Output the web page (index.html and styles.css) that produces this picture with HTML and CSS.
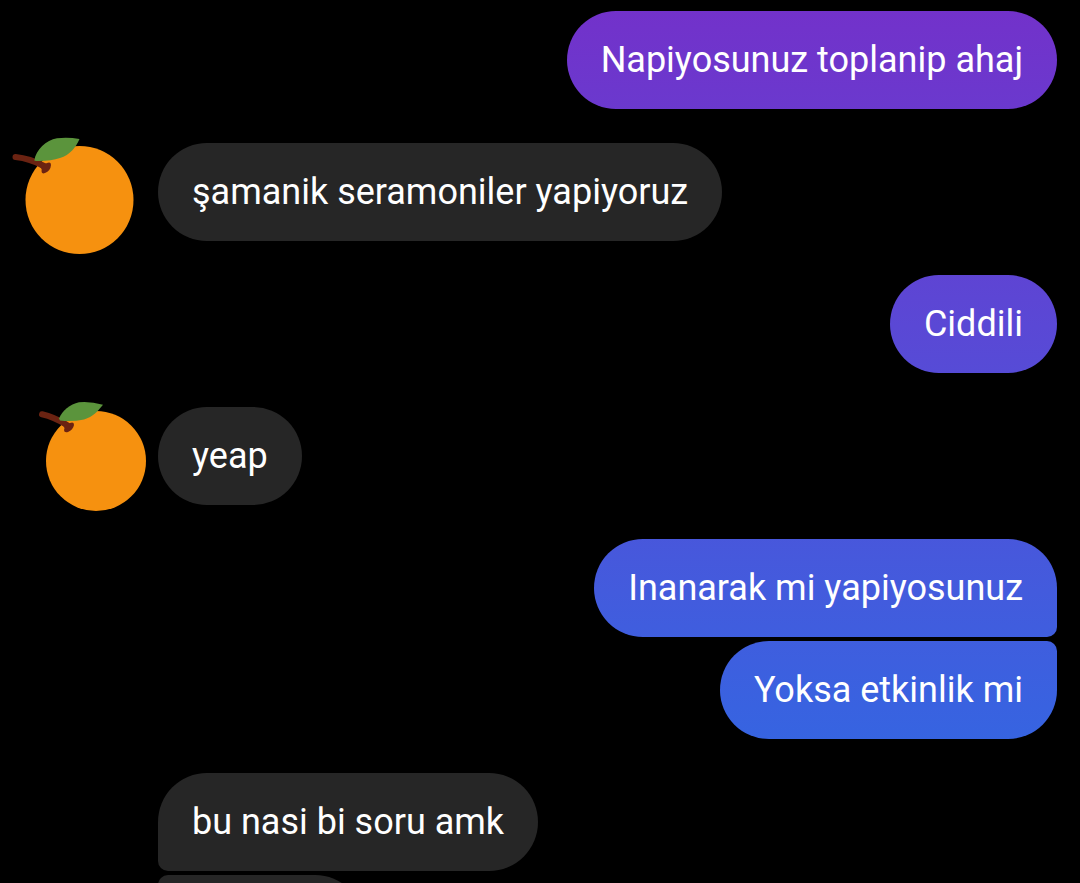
FILE: index.html
```html
<!DOCTYPE html>
<html lang="tr">
<head>
<meta charset="utf-8">
<meta name="viewport" content="width=device-width, initial-scale=1">
<title>Sohbet</title>
<link rel="stylesheet" href="styles.css">
</head>
<body>
<main class="chat">
  <div class="row sent"><p class="bubble">Napiyosunuz toplanip ahaj</p></div>
  <div class="row received">
    <svg class="sticker sticker-large" viewBox="10 136 126 120" aria-hidden="true">
      <circle class="fruit" cx="79.5" cy="200" r="54"/>
      <path class="twig" d="M15.500 157Q30 158.500 44 166"/>
      <path class="stem" d="M42 163Q45 164.500 47 163Q51 161.500 51 165Q50.500 171 45 173Q41.500 174.500 41.500 171Q42.500 168.500 39 166.500Z"/>
      <path class="leaf" d="M34.300 160.500C36 150 46 140 57 138.300Q68 137 79.500 139C76 147 70 155 60 158Q50 161.500 36 161Z"/>
    </svg>
    <p class="bubble">şamanik seramoniler yapiyoruz</p>
  </div>
  <div class="row sent"><p class="bubble">Ciddili</p></div>
  <div class="row received">
    <svg class="sticker sticker-small" viewBox="38 400 110 112" aria-hidden="true">
      <circle class="fruit" cx="96" cy="461" r="50"/>
      <path class="twig" d="M42 414.300Q54 417 67 425"/>
      <path class="stem" d="M66 422Q68 424 70 423Q74 421.500 74 425Q73 430 68 432Q64 433 64 430Q65.500 427.500 62 425Z"/>
      <path class="leaf" d="M59 418.500C62 411 70 404 79 402.200Q90 401 103 404.800C98 411 93 417 84 419.500Q72 422 60 420.500Z"/>
    </svg>
    <p class="bubble">yeap</p>
  </div>
  <div class="group sent">
    <p class="bubble first">Inanarak mi yapiyosunuz</p>
    <p class="bubble last">Yoksa etkinlik mi</p>
  </div>
  <div class="group received">
    <p class="bubble first">bu nasi bi soru amk</p>
    <div class="bubble last pending"></div>
  </div>
</main>
</body>
</html>
```
FILE: styles.css
```css
* { box-sizing: border-box; }

body {
  margin: 0;
  height: 100vh;
  overflow: hidden;
  background: #000;
  color: #fff;
  font: 400 36px/44px Roboto, "Noto Sans", sans-serif;
}

.chat {
  display: flex;
  flex-direction: column;
  gap: 34px;
  padding: 11px 23px 0 158px;
}

.row {
  display: flex;
}

.group {
  display: flex;
  flex-direction: column;
  gap: 4px;
}

.row.sent { justify-content: flex-end; }
.group.sent { align-items: flex-end; }
.group.received { align-items: flex-start; }

.bubble {
  margin: 0;
  min-height: 98px;
  padding: 27px 34px;
  border-radius: 49px;
  background: #262626;
}

.sent .bubble {
  background: linear-gradient(#7331ca 0%, #5a48d5 37%, #435bdd 67%, #3664e1 84%, #2f6be4 100%) fixed;
}

.sent .first { border-bottom-right-radius: 10px; }
.sent .last { border-top-right-radius: 10px; }
.received .first { border-bottom-left-radius: 10px; }
.received .last { border-top-left-radius: 10px; }

.pending { width: 206px; }

.received { position: relative; }

/* Stickers overlap the gutter beside a message */
.sticker { position: absolute; top: -7px; }
.sticker-large { left: -148px; width: 126px; height: 120px; }
.sticker-small { left: -120px; width: 110px; height: 112px; }

.fruit { fill: #f6910f; }
.stem { fill: #6b2312; }
.twig { fill: none; stroke: #6b2312; stroke-width: 6px; stroke-linecap: round; }
.leaf { fill: #5b943c; }
```
